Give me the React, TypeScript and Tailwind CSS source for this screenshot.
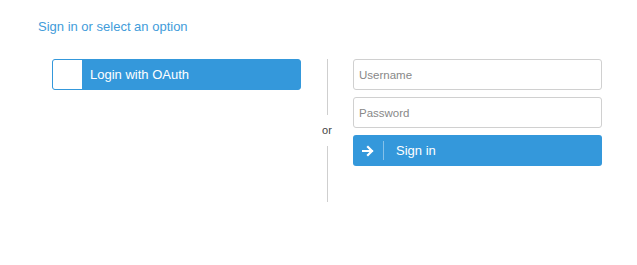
import React from "react";

export default function App() {
  return (
    <div className="w-[637px] h-[265px] bg-white font-['Liberation_Sans',Arial,sans-serif]">
      <div className="pt-[19px] pl-[38px] text-[13px] leading-[15px] text-[#429cda]">
        Sign in or select an option
      </div>
      <div className="flex mt-[25px] pl-[52px]">
        <div className="w-[249px]">
          <button className="flex items-center w-full h-[31px] border border-[#3498db] bg-[#3498db] rounded-[3px] p-0">
            <span className="w-[29px] h-full bg-white rounded-l-[2px]" />
            <span className="ml-[8px] text-[13px] text-white">Login with OAuth</span>
          </button>
        </div>
        <div className="w-[52px] flex flex-col items-center">
          <div className="w-px h-[56px] bg-[#cfcfcf]" />
          <div className="h-[31px] flex items-center text-[11px] text-[#444]">or</div>
          <div className="w-px h-[56px] bg-[#cfcfcf]" />
        </div>
        <div className="w-[249px] flex flex-col gap-[7px]">
          <input
            className="h-[31px] border border-[#d0d0d0] rounded-[3px] px-[5px] text-[11.5px] text-[#333] placeholder:text-[#888] outline-none"
            placeholder="Username"
          />
          <input
            type="password"
            className="h-[31px] border border-[#d0d0d0] rounded-[3px] px-[5px] text-[11.5px] text-[#333] placeholder:text-[#888] outline-none"
            placeholder="Password"
          />
          <button className="flex items-center h-[31px] bg-[#3498db] rounded-[3px] text-white">
            <svg className="ml-[9px]" width="12" height="12" viewBox="0 0 12 12" fill="none">
              <path d="M1 6h9M6 2l4 4-4 4" stroke="white" strokeWidth="2.2" strokeLinecap="square" />
            </svg>
            <span className="ml-[9px] w-px h-[19px] bg-white/40" />
            <span className="ml-[12px] text-[13px]">Sign in</span>
          </button>
        </div>
      </div>
    </div>
  );
}
